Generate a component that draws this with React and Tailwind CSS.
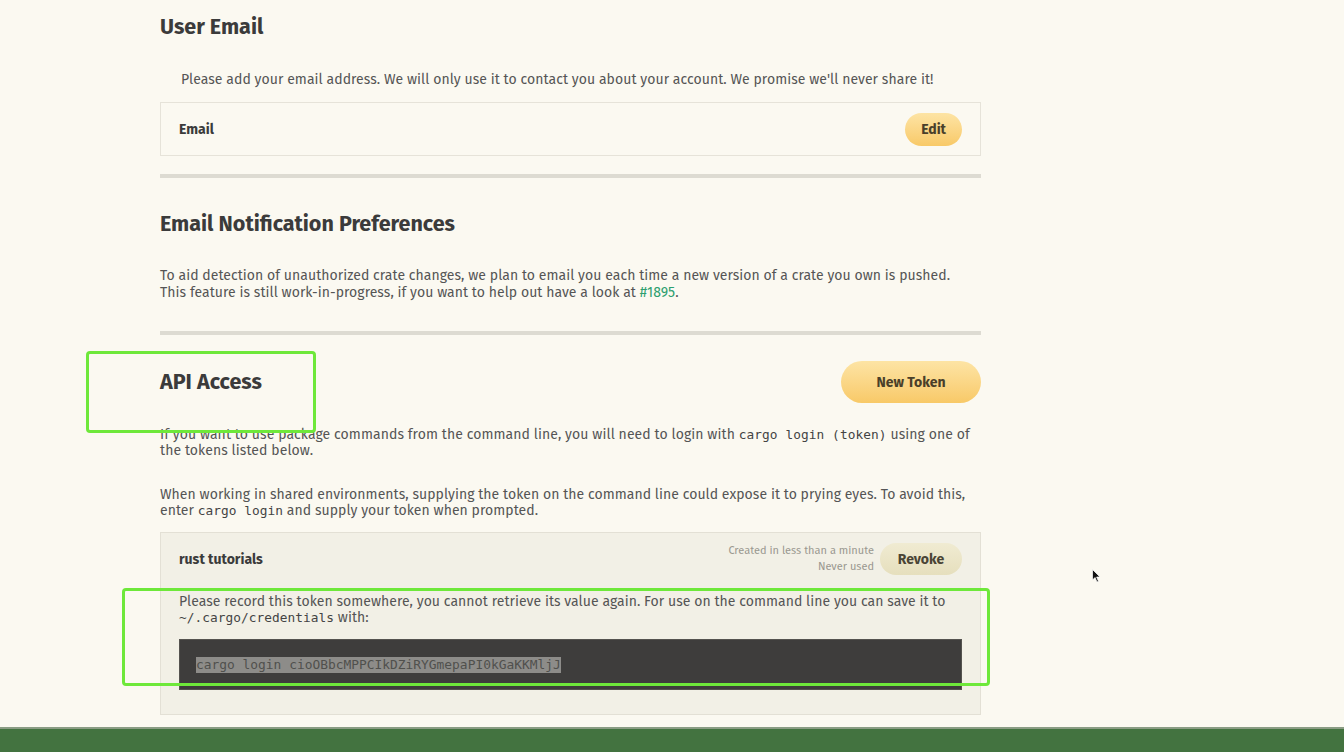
import React from 'react';

const sans = { fontFamily: '"Fira Sans", "Noto Sans", "Open Sans", sans-serif' };

const Code = ({ children }) => (
  <code className="font-['DejaVu_Sans_Mono',monospace] text-[12.8px] text-[#444]">{children}</code>
);

const App = () => {
  return (
    <div className="relative w-[1344px] h-[752px] overflow-hidden bg-[#fbf9f1] text-[#555]" style={sans}>
      <div className="w-[821px] ml-[160px] flex flex-col">
        {/* User Email */}
        <h2 className="text-[21.5px] font-bold text-[#3b3b3b] mt-[12px] leading-[30px]">User Email</h2>
        <p className="text-[14px] mt-[28px] ml-[21px] leading-[20px] tracking-[0.06px]">
          Please add your email address. We will only use it to contact you about your account. We promise we'll never share it!
        </p>
        <div className="mt-[12px] h-[54px] border border-[#e6e3d9] flex items-center justify-between pl-[18px] pr-[18px]">
          <span className="text-[14px] font-bold text-[#3b3b3b]">Email</span>
          <button className="h-[33px] px-[16px] rounded-full bg-gradient-to-b from-[#fde4a4] to-[#f8c967] text-[14px] font-bold text-[#4a3f2a]">Edit</button>
        </div>
        <div className="h-[4px] bg-[#dddbd2] mt-[18px]" />

        {/* Email Notification Preferences */}
        <h2 className="text-[21.5px] font-bold text-[#3b3b3b] mt-[31px] leading-[30px]">Email Notification Preferences</h2>
        <p className="text-[14px] mt-[28px] leading-[17px] tracking-[0.05px]">
          To aid detection of unauthorized crate changes, we plan to email you each time a new version of a crate you own is pushed.
          <br />
          This feature is still work-in-progress, if you want to help out have a look at <span className="text-[#2d9f6f]">#1895</span>.
        </p>
        <div className="h-[4px] bg-[#dddbd2] mt-[30px]" />

        {/* API Access */}
        <div className="flex items-center justify-between mt-[26px]">
          <h2 className="text-[21.5px] font-bold text-[#3b3b3b] leading-[30px]">API Access</h2>
          <button className="h-[42px] w-[140px] rounded-full bg-gradient-to-b from-[#fde4a4] to-[#f8c967] text-[14px] font-bold text-[#4a3f2a]">New Token</button>
        </div>
        <p className="text-[14px] mt-[24px] leading-[16px] tracking-[0.08px]">
          If you want to use package commands from the command line, you will need to login with <Code>cargo login (token)</Code> using one of
          <br />
          the tokens listed below.
        </p>
        <p className="text-[14px] mt-[28px] leading-[16px] tracking-[0.05px]">
          When working in shared environments, supplying the token on the command line could expose it to prying eyes. To avoid this,
          <br />
          enter <Code>cargo login</Code> and supply your token when prompted.
        </p>

        {/* token */}
        <div className="mt-[13px] border border-[#e3e0d5] bg-[#f2f0e6] px-[18px] pt-[10px] pb-[24px]">
          <div className="flex items-center justify-between">
            <span className="text-[14px] font-bold text-[#3b3b3b]">rust tutorials</span>
            <div className="flex items-center gap-[6px]">
              <div className="text-right text-[11px] leading-[16px] text-[#9a9890]">
                <div>Created in less than a minute</div>
                <div>Never used</div>
              </div>
              <button className="h-[32px] w-[82px] rounded-full bg-gradient-to-b from-[#f0ebd2] to-[#e6dfbd] text-[14px] font-bold text-[#4a4535]">Revoke</button>
            </div>
          </div>
          <p className="text-[14px] mt-[19px] leading-[16px] tracking-[0.05px]">
            Please record this token somewhere, you cannot retrieve its value again. For use on the command line you can save it to
            <br />
            <Code>~/.cargo/credentials</Code> with:
          </p>
          <div className="mt-[13px] h-[51px] bg-[#3e3d3c] border border-[#55534f] flex items-center pl-[16px]">
            <span className="font-['DejaVu_Sans_Mono',monospace] text-[12.9px] bg-[#8d8c89] text-[#50504d] leading-[16px]">cargo login cioOBbcMPPCIkDZiRYGmepaPI0kGaKKMljJ</span>
          </div>
        </div>
      </div>

      {/* footer */}
      <div className="absolute left-0 right-0 bottom-0 h-[25px] bg-[#437340] border-t-2 border-[#8a9c84]" />

      {/* annotations */}
      <div className="absolute left-[86px] top-[351px] w-[230px] h-[82px] border-[3px] border-[#6ee83a] rounded-[4px]" />
      <div className="absolute left-[122px] top-[588px] w-[868px] h-[98px] border-[3px] border-[#6ee83a] rounded-[4px]" />

      {/* cursor */}
      <svg className="absolute left-[1092px] top-[569px]" width="10" height="15" viewBox="0 0 10 15">
        <path d="M0.5 0.5 L0.5 11 L3 8.5 L5 13 L6.5 12.3 L4.6 8 L8 8 Z" fill="#111" stroke="#fff" strokeWidth="0.7" />
      </svg>
    </div>
  );
};

export default App;
